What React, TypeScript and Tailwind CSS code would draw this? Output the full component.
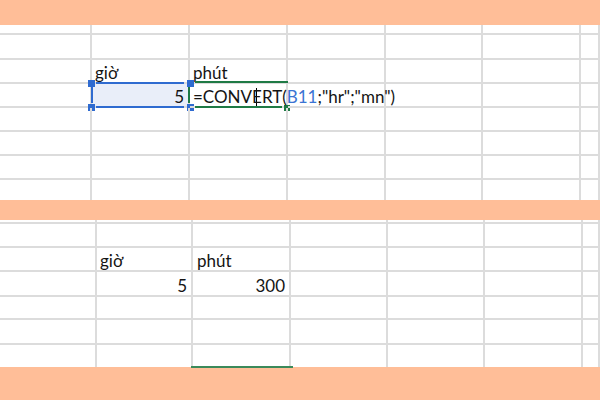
import React from 'react';

const TOP_COLS = 'grid-cols-[92px_98px_98px_98px_97px_98px_1fr]';
const BOTTOM_COLS = 'grid-cols-[97px_96px_98px_97px_97px_98px_1fr]';

type CellProps = {
  children?: React.ReactNode;
  last?: boolean;
  right?: boolean;
  className?: string;
};

// one spreadsheet cell, text sits on the bottom edge like Excel
const Cell = ({ children, last, right, className = '' }: CellProps) => (
  <div
    className={`relative flex items-end whitespace-nowrap border-r-2 border-[#dcdcdc] pb-[1px] ${
      right ? 'justify-end pr-[4px]' : 'justify-start pl-[3px]'
    } ${last ? '' : 'border-b-2'} ${className}`}>
    {children}
  </div>
);

const Handle = ({ className }: { className: string }) => (
  <span className={`absolute size-[7px] bg-[#2f6bd0] ${className}`} />
);

type Content = { text?: React.ReactNode; right?: boolean; extra?: string; overlay?: React.ReactNode };

function Sheet({
  cols,
  rows,
  height,
  content,
}: {
  cols: string;
  rows: string;
  height: string;
  content: Record<string, Content>;
}) {
  const rowCount = rows.split('_').length;
  const cells: React.ReactNode[] = [];
  for (let r = 0; r < rowCount; r++) {
    for (let c = 0; c < 7; c++) {
      const item = content[`${r}-${c}`] ?? {};
      cells.push(
        <Cell key={`${r}-${c}`} last={r === rowCount - 1} right={item.right} className={item.extra}>
          {item.text}
          {item.overlay}
        </Cell>
      );
    }
  }
  return <div className={`grid ${height} ${cols} ${rows} bg-white`}>{cells}</div>;
}

const topContent: Record<string, Content> = {
  '2-1': { text: 'giờ' },
  '2-2': { text: 'phút' },
  '3-1': {
    text: '5',
    right: true,
    extra: 'bg-[#e9eef9]',
    overlay: (
      <>
        <span className="absolute left-[4px] right-[4px] top-[-2px] h-[2px] bg-[#2f6bd0]" />
        <span className="absolute bottom-[-2px] left-[4px] right-[4px] h-[2px] bg-[#2f6bd0]" />
        <span className="absolute bottom-[3px] left-[-1px] top-[3px] w-[2px] bg-[#2f6bd0]" />
        <Handle className="left-[-4px] top-[-4px]" />
        <Handle className="bottom-[-5px] left-[-4px]" />
        <Handle className="right-[-6px] top-[-4px]" />
        <Handle className="bottom-[-5px] right-[-6px]" />
      </>
    ),
  },
  '3-2': {
    text: (
      <span className="relative z-10">
        =CONVERT(<span className="text-[#3a74d3]">B11</span>;"hr";"mn")
      </span>
    ),
    overlay: (
      <>
        <span className="absolute left-[5px] right-[-2px] top-[-3px] h-[2px] bg-[#1f7a45]" />
        <span className="absolute bottom-[-2px] left-[5px] right-[4px] h-[2px] bg-[#1f7a45]" />
        <span className="absolute bottom-[3px] left-[-2px] top-[3px] w-[2px] bg-[#1f7a45]" />
        <span className="absolute bottom-[-5px] right-[-4px] size-[6px] bg-[#1f7a45]" />
        {/* caret */}
        <span className="absolute bottom-0 left-[66px] top-[4px] w-[1px] bg-black" />
      </>
    ),
  },
};

const bottomContent: Record<string, Content> = {
  '2-1': { text: 'giờ' },
  '2-2': { text: <span className="pl-[1px]">phút</span> },
  '3-1': { text: '5', right: true },
  '3-2': { text: '300', right: true },
  '6-2': {
    overlay: <span className="absolute bottom-[-1px] left-[-2px] right-[-4px] h-[2px] bg-[#3b8a5a]" />,
  },
};

export default function App() {
  return (
    <div className="flex h-[400px] w-[600px] flex-col overflow-hidden bg-[#ffbe98] font-['Lato',sans-serif] text-[17px] leading-none text-[#141414]">
      <div className="h-[25px] shrink-0" />
      <Sheet
        cols={TOP_COLS}
        rows="grid-rows-[10px_25px_24px_24px_24px_24px_24px_1fr]"
        height="h-[175px]"
        content={topContent}
      />
      <div className="h-[20px] shrink-0" />
      <Sheet
        cols={BOTTOM_COLS}
        rows="grid-rows-[4px_24px_24px_25px_23px_25px_1fr]"
        height="h-[147px]"
        content={bottomContent}
      />
      <div className="flex-1" />
    </div>
  );
}
